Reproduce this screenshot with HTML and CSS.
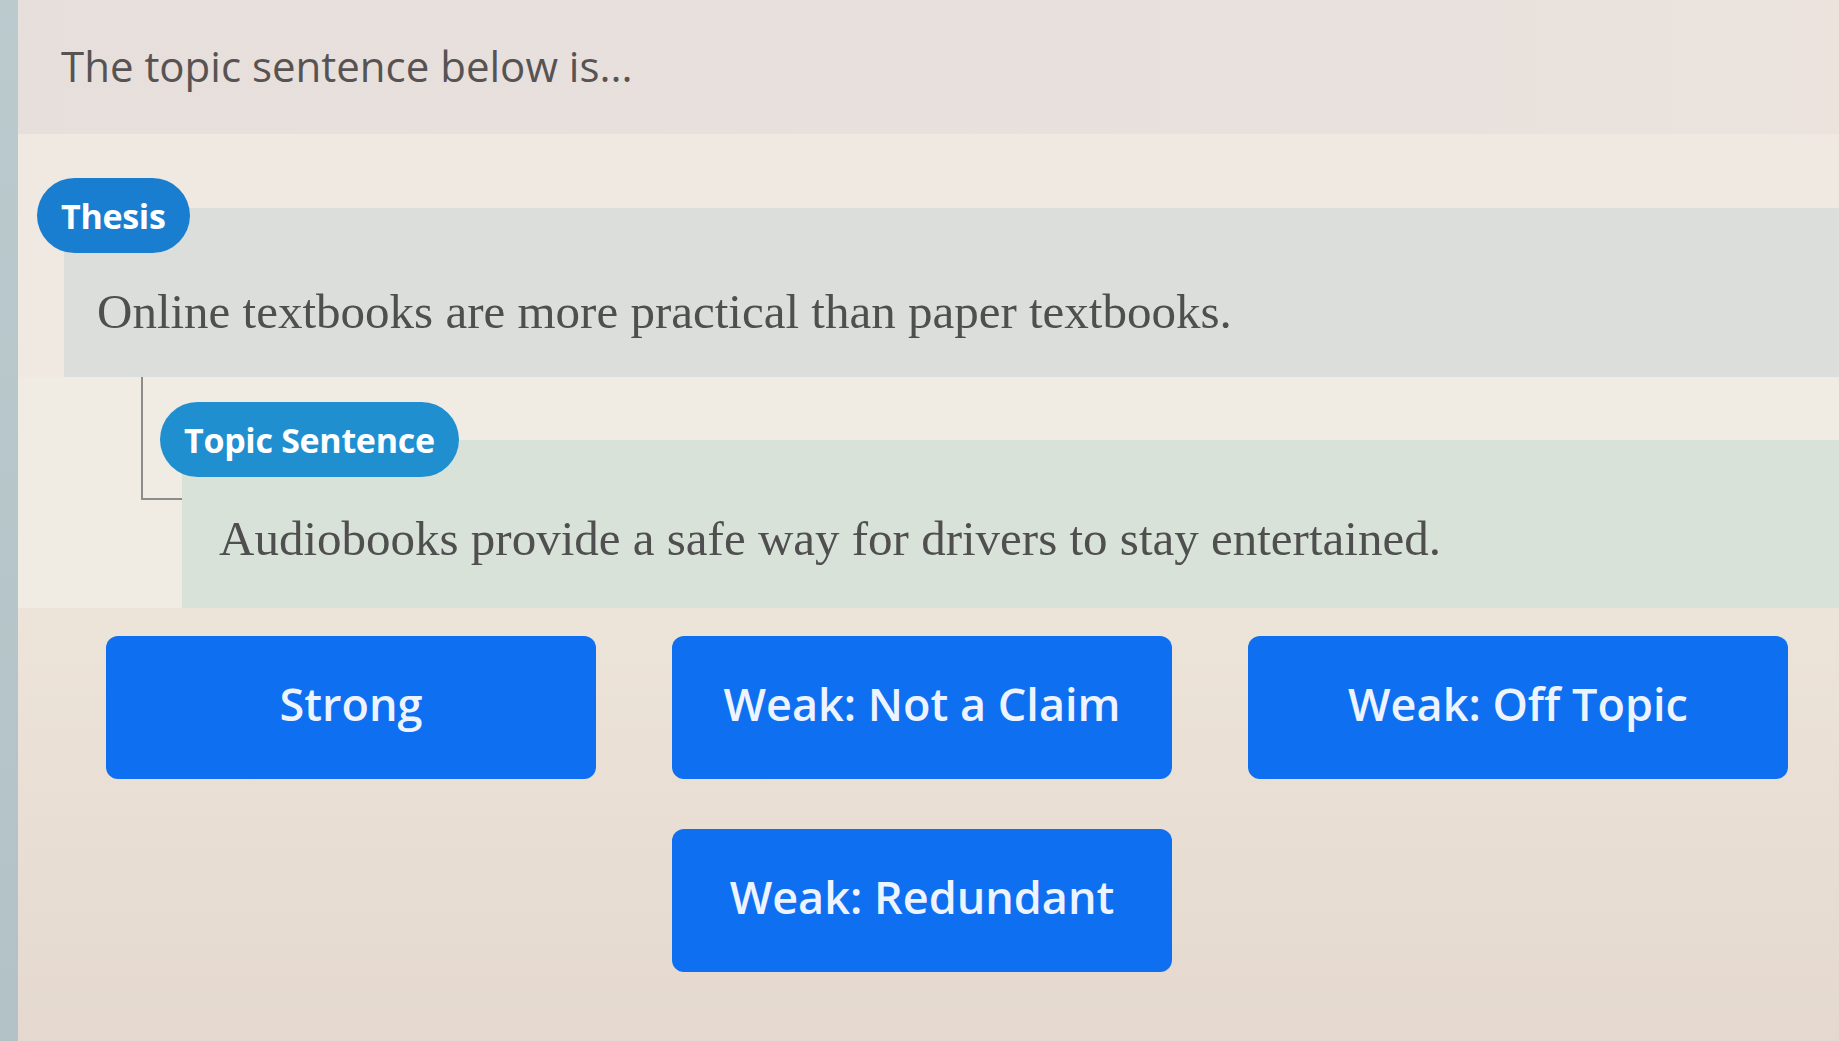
FILE: index.html
```html
<!DOCTYPE html>
<html lang="en">
<head>
<meta charset="utf-8">
<title>Topic sentence</title>
<link rel="stylesheet" href="styles.css">
</head>
<body>
<div class="screen">
  <div class="edge"></div>
  <main class="content">
    <header class="prompt">
      <h1 class="prompt-text">The topic sentence below is...</h1>
    </header>
    <section class="thesis">
      <span class="pill pill-thesis">Thesis</span>
      <div class="box box-thesis">
        <p class="sentence">Online textbooks are more practical than paper textbooks.</p>
      </div>
    </section>
    <section class="topic">
      <span class="pill pill-topic">Topic Sentence</span>
      <div class="box box-topic">
        <p class="sentence">Audiobooks provide a safe way for drivers to stay entertained.</p>
      </div>
    </section>
    <div class="choices">
      <button class="choice">Strong</button>
      <button class="choice">Weak: Not a Claim</button>
      <button class="choice">Weak: Off Topic</button>
      <button class="choice choice-center">Weak: Redundant</button>
    </div>
  </main>
</div>
</body>
</html>
```
FILE: styles.css
```css
html, body {
  margin: 0;
  padding: 0;
}

body {
  background: #ece3d9;
  font-family: "Open Sans", "Liberation Sans", sans-serif;
}

.screen {
  display: flex;
  width: 1839px;
  height: 1041px;
  overflow: hidden;
}

.edge {
  width: 18px;
  flex: none;
  background: linear-gradient(to bottom, #bacacd, #b2c2c6);
}

.content {
  flex: 1;
  display: flex;
  flex-direction: column;
  background: linear-gradient(to bottom, #efe7dd 0%, #ece3d9 60%, #e5d9cf 100%);
}

.prompt {
  height: 134px;
  box-sizing: border-box;
  padding: 45px 0 0 43px;
  background: linear-gradient(to right, #e7dfdb 0%, #e9e1dd 80%, #ebe3dc 100%);
}

.prompt-text {
  margin: 0;
  font-size: 42px;
  font-weight: 400;
  line-height: 1;
  color: #575353;
}

.thesis {
  display: flex;
  flex-direction: column;
  align-items: flex-start;
  padding-top: 44px;
  background: #efe9e1;
}

.pill {
  position: relative;
  z-index: 1;
  display: inline-flex;
  align-items: center;
  justify-content: center;
  height: 75px;
  box-sizing: border-box;
  border-radius: 38px;
  font-size: 34px;
  font-weight: 700;
  color: #ffffff;
  letter-spacing: -0.3px;
}

.pill-thesis {
  margin-left: 19px;
  padding: 0 24px;
  background: #1a7ed0;
}

.pill-topic {
  margin-left: 142px;
  padding: 0 24px;
  background: #1f8fd0;
}

.box {
  align-self: stretch;
  box-sizing: border-box;
}

.box-thesis {
  margin: -45px 0 0 46px;
  height: 169px;
  padding: 74px 0 0 33px;
  background: #dcdedb;
}

.sentence {
  margin: 0;
  font-family: "Liberation Serif", "Times New Roman", serif;
  font-size: 49px;
  line-height: 59px;
  color: #4f4f4f;
  white-space: nowrap;
}

.topic {
  position: relative;
  display: flex;
  flex-direction: column;
  align-items: flex-start;
  padding-top: 25px;
  background: #f0ebe3;
}

.topic::before {
  content: "";
  position: absolute;
  left: 123px;
  top: 0;
  width: 41px;
  height: 123px;
  border-left: 2px solid #8c8c8a;
  border-bottom: 2px solid #8c8c8a;
  box-sizing: border-box;
}

.box-topic {
  margin: -37px 0 0 164px;
  height: 168px;
  padding: 69px 0 0 37px;
  background: #d9e2d9;
}

.choices {
  display: grid;
  grid-template-columns: 490px 500px 540px;
  column-gap: 76px;
  row-gap: 50px;
  margin: 28px 0 0 88px;
}

.choice {
  height: 143px;
  border: none;
  border-radius: 12px;
  background: #0e6ff0;
  color: #eef4ff;
  font-family: "Open Sans", "Liberation Sans", sans-serif;
  font-size: 45px;
  font-weight: 600;
  padding: 0 0 8px;
  cursor: pointer;
}

.choice-center {
  grid-column: 2;
}
```
